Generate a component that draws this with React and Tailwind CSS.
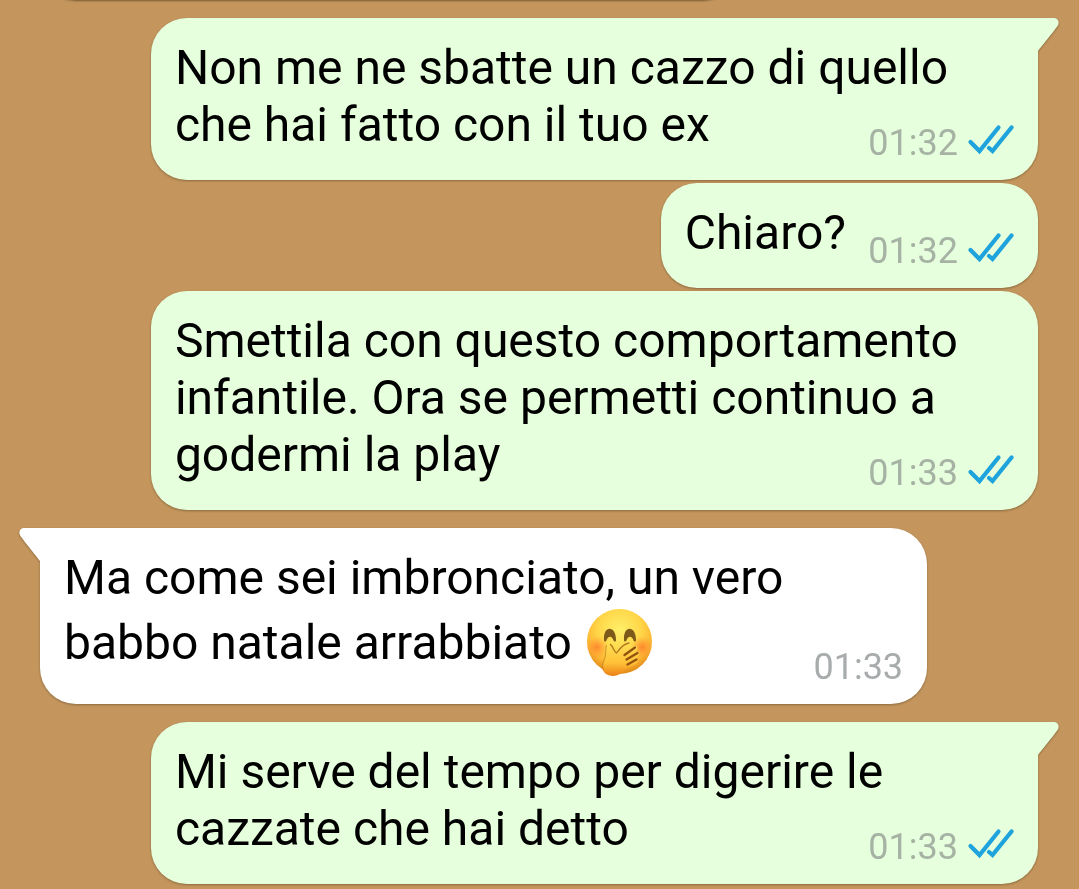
const messages = [
  { id: 1, mine: true, tail: true, time: '01:32', text: 'Non me ne sbatte un cazzo di quello che hai fatto con il tuo ex' },
  { id: 2, mine: true, time: '01:32', text: 'Chiaro?' },
  { id: 3, mine: true, time: '01:33', text: 'Smettila con questo comportamento infantile. Ora se permetti continuo a godermi la play' },
  { id: 4, mine: false, tail: true, time: '01:33', text: 'Ma come sei imbronciato, un vero babbo natale arrabbiato', emoji: true },
  { id: 5, mine: true, tail: true, time: '01:33', text: 'Mi serve del tempo per digerire le cazzate che hai detto' },
];

const ReadTicks = () => (
  <svg className="mt-0.5 h-8 w-12" viewBox="0 0 48 32" fill="none" stroke="#1fa3dc" strokeWidth="4.2" strokeLinecap="round" role="img" aria-label="Letto">
    <path d="M4.5 19 L13.5 28 L32.5 4.5" />
    <path d="M23 25 L26.5 28 L45.5 4.5" />
  </svg>
);

const Tail = ({ mine }) => (
  <svg
    className={mine ? 'absolute top-0 left-full -ml-px h-[34px] w-[22px]' : 'absolute top-0 right-full -mr-px h-[34px] w-[22px] -scale-x-100'}
    viewBox="0 0 22 34"
    fill="currentColor"
    aria-hidden="true"
  >
    <path d="M0 0 H17 C21 0 23 4.5 20.5 8 C19 10.5 5 28 1 33 L0 34 Z" />
  </svg>
);

const GiggleEmoji = () => (
  <svg className="inline-block h-[71px] w-[72px] align-[-18px]" viewBox="1 0 72 71" role="img" aria-label="🤭">
    <defs>
      <radialGradient id="face" cx="50%" cy="32%" r="67%">
        <stop offset="0" stopColor="#fff06a" />
        <stop offset="0.5" stopColor="#ffd648" />
        <stop offset="0.8" stopColor="#fcb432" />
        <stop offset="1" stopColor="#e08a18" />
      </radialGradient>
      <radialGradient id="cheek">
        <stop offset="0" stopColor="#ff7428" stopOpacity="0.75" />
        <stop offset="1" stopColor="#ff8a35" stopOpacity="0" />
      </radialGradient>
      <linearGradient id="hand" x1="0" y1="0" x2="0" y2="1">
        <stop offset="0" stopColor="#ffdf55" />
        <stop offset="0.6" stopColor="#ffc238" />
        <stop offset="1" stopColor="#ec7f16" />
      </linearGradient>
    </defs>
    <circle cx="36.5" cy="35.5" r="32.5" fill="url(#face)" />
    <circle cx="14" cy="41" r="11" fill="url(#cheek)" />
    <circle cx="59" cy="41" r="11" fill="url(#cheek)" />
    <path d="M21 34 C20 19 33 19 33 34 C33 36 31 36 30.5 34.5 C29 29.5 25 29.5 23.5 34.5 C23 36 21 36 21 34 Z" fill="#7d5a1a" />
    <path d="M41 34 C40 19 53 19 53 34 C53 36 51 36 50.5 34.5 C49 29.5 45 29.5 43.5 34.5 C43 36 41 36 41 34 Z" fill="#7d5a1a" />
    <path
      d="M25.5 38 C29 37 30 43 33 47 C37 42 42 37.5 46.5 37 C49.5 37.5 48 40.5 45.5 42.5 C50 39 54.5 39 54.5 42 C54.5 44 52.5 45.5 51.5 46.5 C54.5 44.5 58 46 56 49 C55 51 53 52.5 52 53.5 C55.5 52.5 56 55 54 57 C49 61 43 62 39.5 66 C34 71.5 23 71.5 20 64 C18 58 21.5 54 22.5 49 C23 45 22 39 25.5 38 Z"
      fill="url(#hand)"
    />
    <g fill="none" stroke="#93530e" strokeLinecap="round">
      <path d="M27.5 38.500 C30.5 41 31 46 33.5 47 C37 42 42 37.5 46 37" strokeWidth="1.3" opacity="0.75" />
      <path d="M41.5 49 L52 41.5" strokeWidth="2.3" />
      <path d="M43.5 53.5 L54.5 47" strokeWidth="2.3" />
      <path d="M44.5 58.5 L53.5 53.5" strokeWidth="2.3" />
      <path d="M23.5 39.5 C22 44 23.5 49 21.5 53 C19.5 57 19 61 20.5 64" strokeWidth="1.1" opacity="0.4" />
    </g>
  </svg>
);

const Bubble = ({ message }) => {
  const { mine, tail, time, text, emoji } = message;

  const side = mine ? 'self-end bg-[#e6ffdc] text-[#e6ffdc]' : 'self-start bg-white text-white';
  const corner = !tail ? '' : mine ? 'rounded-tr-none' : 'rounded-tl-none';
  const margin = tail ? 'mt-[18px]' : 'mt-[3px]';

  return (
    <li className={`relative max-w-8/9 rounded-[36px] px-6 pt-[21px] pb-[27px] drop-shadow-[0_1px_1px_rgba(70,50,20,0.45)] ${side} ${corner} ${margin}`}>
      {tail && <Tail mine={mine} />}
      <p className="text-[48px] leading-[57px] text-black">
        {text}
        {emoji && <> <GiggleEmoji /></>}
        {/* keeps room for the time on the last line */}
        <span className={mine ? 'inline-block h-1 w-42' : 'inline-block h-1 w-28'} />
      </p>
      <div className={`-mt-8 -mb-3 flex h-11 items-start justify-end gap-2 text-[36px] leading-[44px] ${mine ? 'text-[#a5b2a4]' : 'text-[#a8acad]'}`}>
        <time>{time}</time>
        {mine && <ReadTicks />}
      </div>
    </li>
  );
};

export default function App() {
  return (
    <main className="min-h-screen overflow-hidden bg-[#c4965e] pr-[41px] pl-10 font-[Roboto,sans-serif]">
      <div className="-mt-12 h-12 w-7/10 rounded-b-[36px] bg-white shadow-[0_1px_2px_rgba(70,50,20,0.6)]" />
      <ul className="flex flex-col pb-1">
        {messages.map((message) => (
          <Bubble key={message.id} message={message} />
        ))}
      </ul>
    </main>
  );
}
